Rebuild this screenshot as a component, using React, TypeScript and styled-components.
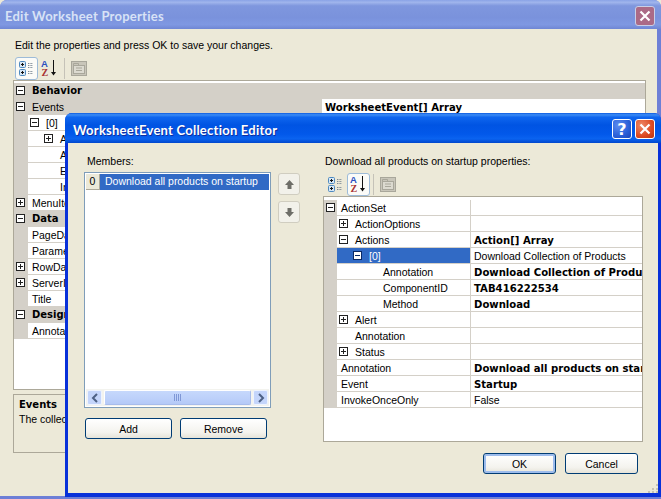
import React from "react";
import styled, { createGlobalStyle } from "styled-components";

const GlobalStyle = createGlobalStyle`
  html, body { margin: 0; padding: 0; background: #ece9d8; }
  #root { width: 661px; height: 499px; }
`;

const Desktop = styled.div`
  position: relative;
  width: 661px;
  height: 499px;
  overflow: hidden;
  font-family: "Liberation Sans", "DejaVu Sans", sans-serif;
  font-size: 10.5px;
  color: #000;
`;

const Frame = styled.div<{ $left: number; $top: number; $width: number; $height: number; $active?: boolean }>`
  position: absolute;
  left: ${(p) => p.$left}px;
  top: ${(p) => p.$top}px;
  width: ${(p) => p.$width}px;
  height: ${(p) => p.$height}px;
  box-sizing: border-box;
  display: flex;
  flex-direction: column;
  border-radius: 7px 7px 0 0;
  padding: 0 ${(p) => (p.$active ? 3 : 4)}px ${(p) => (p.$active ? 4 : 3)}px;
  background: ${(p) => (p.$active ? "#0831d9" : "#6d7fd6")};
`;

const TitleBar = styled.div<{ $active?: boolean; $height: number }>`
  display: flex;
  align-items: center;
  flex: none;
  height: ${(p) => p.$height}px;
  box-sizing: border-box;
  margin: 0 -${(p) => (p.$active ? 3 : 4)}px;
  padding: 2px 6px 0 ${(p) => (p.$active ? 8 : 5)}px;
  border-radius: 7px 7px 0 0;
  background: ${(p) =>
    p.$active
      ? "linear-gradient(180deg, #0a5ae0 0%, #3c8cf5 6%, #0f66ee 14%, #0054e3 40%, #0258ea 70%, #0a63f0 86%, #0147cc 100%)"
      : "linear-gradient(180deg, #8aa3e6 0%, #a0b5ec 8%, #7f97de 20%, #7a92dc 60%, #7f98e2 85%, #6f86d4 100%)"};
`;

const TitleText = styled.span<{ $active?: boolean }>`
  flex: 1;
  padding-top: 1px;
  font-family: Lato, "DejaVu Sans", sans-serif;
  font-weight: 700;
  font-size: 13px;
  letter-spacing: 0.24px;
  white-space: nowrap;
  color: ${(p) => (p.$active ? "#fff" : "#d8e2f6")};
  text-shadow: ${(p) => (p.$active ? "1px 1px 0 #0f2fa0" : "none")};
`;

const CaptionButton = styled.div<{ $tone: "help" | "close" | "faded" }>`
  width: 20px;
  height: 20px;
  margin-left: 3px;
  box-sizing: border-box;
  display: flex;
  align-items: center;
  justify-content: center;
  border: 1px solid ${(p) => (p.$tone === "faded" ? "#c9cfe6" : "#fff")};
  border-radius: 3px;
  font: 700 16px "DejaVu Sans", sans-serif;
  color: #fff;
  background: ${(p) =>
    p.$tone === "help"
      ? "radial-gradient(circle at 30% 30%, #5c8df0, #2a5fd8 60%, #1c45b8)"
      : p.$tone === "close"
        ? "radial-gradient(circle at 30% 30%, #ee8a68, #dd4a22 60%, #b8340f)"
        : "#ab6a86"};
`;

const Client = styled.div`
  flex: 1;
  min-height: 0;
  position: relative;
  background: #ece9d8;
`;

const BackBody = styled(Client)`
  display: flex;
  flex-direction: column;
  margin-left: -4px;
  padding: 9px 11px 0 13px;
`;

const Hint = styled.div`
  padding-left: 2px;
  height: 14px;
  line-height: 14px;
  white-space: nowrap;
`;

const ToolRow = styled.div<{ $inset: number; $top: number }>`
  display: flex;
  align-items: center;
  height: 23px;
  flex: none;
  margin-top: ${(p) => p.$top}px;
  padding-left: ${(p) => p.$inset}px;
`;

const ToolButton = styled.div<{ $on?: boolean }>`
  width: 23px;
  height: 23px;
  box-sizing: border-box;
  display: flex;
  align-items: center;
  justify-content: center;
  border-radius: 3px;
  border: 1px solid ${(p) => (p.$on ? "#9dbbd8" : "transparent")};
  background: ${(p) => (p.$on ? "#fbfbf8" : "transparent")};
`;

const ToolSep = styled.div`
  width: 1px;
  height: 21px;
  margin: 0 6px 0 3px;
  background: #c5c2b8;
`;

const DisabledIcon = styled.div`
  display: flex;
`;

const GridBox = styled.div<{ $grow?: boolean; $height?: number }>`
  box-sizing: border-box;
  border: 1px solid #aca899;
  background: #fff;
  flex: ${(p) => (p.$grow ? 1 : "none")};
  height: ${(p) => (p.$height ? `${p.$height}px` : "auto")};
  overflow: hidden;
`;

const Row = styled.div`
  display: flex;
  height: 16px;
  box-sizing: border-box;
  line-height: 16px;
  white-space: nowrap;
`;

const Gutter = styled.div<{ $width: number }>`
  flex: none;
  width: ${(p) => p.$width}px;
  box-sizing: border-box;
  padding: 3px 0 0 2px;
  background: #d4d0c8;
`;

const NameCell = styled.div<{ $width: number; $tone: "plain" | "gray" | "blue"; $indent: number; $strong?: boolean }>`
  flex: none;
  display: flex;
  align-items: center;
  width: ${(p) => p.$width}px;
  box-sizing: border-box;
  padding-left: ${(p) => p.$indent}px;
  overflow: hidden;
  border-bottom: 1px solid #d4d0c8;
  font-family: ${(p) => (p.$strong ? `"DejaVu Sans", sans-serif` : "inherit")};
  font-weight: ${(p) => (p.$strong ? 700 : 400)};
  font-size: ${(p) => (p.$strong ? "10px" : "inherit")};
  background: ${(p) => (p.$tone === "gray" ? "#d4d0c8" : p.$tone === "blue" ? "#316ac5" : "#fff")};
  color: ${(p) => (p.$tone === "blue" ? "#fff" : "#000")};
`;

const ValueCell = styled.div<{ $strong?: boolean; $tone?: "gray" }>`
  flex: 1;
  min-width: 0;
  padding-left: 3px;
  overflow: hidden;
  border-left: 1px solid #d4d0c8;
  border-bottom: 1px solid #d4d0c8;
  font-family: ${(p) => (p.$strong ? `"DejaVu Sans", sans-serif` : "inherit")};
  font-weight: ${(p) => (p.$strong ? 700 : 400)};
  font-size: ${(p) => (p.$strong ? "10.100px" : "inherit")};
  line-height: ${(p) => (p.$strong ? "18px" : "16px")};
  background: ${(p) => (p.$tone === "gray" ? "#d4d0c8" : "#fff")};
`;

const Expander = styled.span<{ $gap?: number }>`
  flex: none;
  display: block;
  width: 9px;
  height: 9px;
  margin-right: ${(p) => p.$gap ?? 0}px;
`;

const HelpBox = styled.div`
  flex: none;
  height: 59px;
  margin: 4px 0 43px;
  box-sizing: border-box;
  border: 1px solid #aca899;
  padding: 2px 5px;
  line-height: 15px;
`;

const HelpTitle = styled.div`
  font-family: "DejaVu Sans", sans-serif;
  font-weight: 700;
  font-size: 10px;
`;

const FrontBody = styled(Client)`
  display: flex;
  padding: 11px 0 0 16px;
`;

const LeftCol = styled.div`
  flex: none;
  width: 187px;
  display: flex;
  flex-direction: column;
`;

const FieldLabel = styled.div<{ $inset: number; $below: number }>`
  height: 14px;
  margin-bottom: ${(p) => p.$below}px;
  padding-left: ${(p) => p.$inset}px;
  line-height: 14px;
  white-space: nowrap;
`;

const ListBox = styled.div`
  height: 236px;
  box-sizing: border-box;
  display: flex;
  flex-direction: column;
  justify-content: space-between;
  padding: 1px;
  border: 1px solid #7f9db9;
  background: #fff;
`;

const ListItem = styled.div`
  display: flex;
  height: 16px;
  line-height: 15px;
  white-space: nowrap;
`;

const IndexBadge = styled.div`
  flex: none;
  width: 14px;
  box-sizing: border-box;
  text-align: center;
  background: #ece9d8;
  border-right: 1px solid #aca899;
  border-bottom: 1px solid #aca899;
`;

const ItemLabel = styled.div`
  flex: 1;
  padding-left: 5px;
  background: #316ac5;
  color: #fff;
`;

const ScrollBar = styled.div`
  display: flex;
  align-items: center;
  gap: 2px;
  height: 17px;
  padding: 0 1px;
  background: #f3f3ee;
`;

const ScrollArrow = styled.div`
  flex: none;
  width: 15px;
  height: 15px;
  box-sizing: border-box;
  display: flex;
  align-items: center;
  justify-content: center;
  border: 1px solid #eef3fe;
  border-radius: 2px;
  background: #c4d5fb;
`;

const ScrollThumb = styled.div`
  flex: 1;
  height: 15px;
  box-sizing: border-box;
  display: flex;
  align-items: center;
  justify-content: center;
  border: 1px solid #fff;
  border-right-color: #a8bcec;
  border-bottom-color: #a8bcec;
  border-radius: 2px;
  background: linear-gradient(180deg, #c6d8fc, #bcd0fa 60%, #b4c9f7);
`;

const ListButtons = styled.div`
  display: flex;
  justify-content: space-between;
  margin: 10px 4px 0 1px;
`;

const PushButton = styled.div<{ $width: number; $isDefault?: boolean }>`
  width: ${(p) => p.$width}px;
  height: 21px;
  box-sizing: border-box;
  display: flex;
  align-items: center;
  justify-content: center;
  border: 1px solid #003c74;
  border-radius: 3px;
  background: linear-gradient(180deg, #fff, #f4f3ee 70%, #e6e3d8);
  box-shadow: ${(p) => (p.$isDefault ? "inset 0 0 0 2px #9dbcec" : "none")};
`;

const ArrowCol = styled.div`
  flex: none;
  display: flex;
  flex-direction: column;
  gap: 6px;
  margin: 19px 23px 0 7px;
`;

const MoveButton = styled.div`
  width: 22px;
  height: 22px;
  box-sizing: border-box;
  display: flex;
  align-items: center;
  justify-content: center;
  border: 1px solid #d0cdc0;
  border-radius: 3px;
  background: #f2f1ea;
`;

const RightCol = styled.div`
  flex: none;
  width: 320px;
  display: flex;
  flex-direction: column;
`;

const RowStack = styled.div<{ $top: number }>`
  padding-top: ${(p) => p.$top}px;
  background: #fff;
`;

const Footer = styled.div`
  display: flex;
  justify-content: flex-end;
  gap: 9px;
  margin-top: 11px;
  padding-right: 5px;
`;

const Grip = styled.svg`
  position: absolute;
  right: 0;
  bottom: 0;
`;

function ExpandBox({ open, gap, light }: { open: boolean; gap?: number; light?: boolean }) {
  const stroke = light ? "#0b2a66" : "#222";
  return (
    <Expander $gap={gap}>
      <svg width="9" height="9" viewBox="0 0 9 9" style={{ display: "block" }}>
        <rect x="0.5" y="0.5" width="8" height="8" fill="#fff" stroke={stroke} />
        <path d={open ? "M2 4.5h5" : "M2 4.5h5M4.5 2v5"} stroke={stroke} />
      </svg>
    </Expander>
  );
}

function CategoryIcon() {
  const lines = "M10 3.5h5M10 5.5h5M10 7.5h5M10 11.5h5M10 13.5h5";
  return (
    <svg width="17" height="17" viewBox="0 0 17 17">
      <rect x="1.5" y="1.5" width="6" height="6" rx="1" fill="#d6e6f4" stroke="#4f8ac0" />
      <rect x="1.5" y="9.5" width="6" height="6" rx="1" fill="#d6e6f4" stroke="#4f8ac0" />
      <path d="M3 4.5h3M4.5 3v3M3 12.5h3M4.5 11v3" stroke="#111" />
      <path d={lines} stroke="#7d8a96" strokeDasharray="1 0.6" />
    </svg>
  );
}

function SortIcon() {
  return (
    <svg width="17" height="19" viewBox="0 0 17 19">
      <text x="0" y="8" fontFamily="Liberation Sans, sans-serif" fontWeight="700" fontSize="9.5" fill="#2a4fc0">A</text>
      <text x="0.5" y="17" fontFamily="Liberation Serif, serif" fontWeight="700" fontSize="10" fill="#a83232">Z</text>
      <path d="M12.5 1v13" stroke="#111" />
      <path d="M10 13h5l-2.500 3.500z" fill="#111" />
    </svg>
  );
}

function PagesIcon() {
  return (
    <svg width="16" height="15" viewBox="0 0 16 15">
      <rect x="0.500" y="0.500" width="15" height="14" fill="#c9c6ba" stroke="#a9a79b" />
      <rect x="2.500" y="4.500" width="11" height="8" fill="#dcdad0" stroke="#a9a79b" />
      <path d="M2.500 4.500v-2h5v2M5 7h6M5 9.500h6" fill="none" stroke="#a9a79b" />
    </svg>
  );
}

function Toolbar({ inset, top, sorted }: { inset: number; top: number; sorted?: boolean }) {
  return (
    <ToolRow $inset={inset} $top={top}>
      <ToolButton $on={!sorted}><CategoryIcon /></ToolButton>
      <ToolButton $on={sorted}><SortIcon /></ToolButton>
      <ToolSep />
      <DisabledIcon><PagesIcon /></DisabledIcon>
    </ToolRow>
  );
}

function CloseGlyph() {
  return (
    <svg width="12" height="12" viewBox="0 0 12 12">
      <path d="M1.500 1.500l9 9M10.500 1.500l-9 9" stroke="#fff" strokeWidth="2.200" />
    </svg>
  );
}

type BackRow = { name: string; value?: string; open?: boolean; level?: number; tone?: "gray"; head?: boolean };

const backRows: BackRow[] = [
  { name: "Behavior", open: true, head: true },
  { name: "Events", open: true, tone: "gray", value: "WorksheetEvent[] Array" },
  { name: "[0]", open: true, level: 1 },
  { name: "ActionSet", open: false, level: 2 },
  { name: "Annotation", level: 2 },
  { name: "Event", level: 2 },
  { name: "InvokeOnceOnly", level: 2 },
  { name: "MenuItems", open: false },
  { name: "Data", open: true, head: true },
  { name: "PageData" },
  { name: "Parameters" },
  { name: "RowData", open: false },
  { name: "ServerInfo", open: false },
  { name: "Title" },
  { name: "Design", open: true, head: true },
  { name: "Annotation" },
];

type FrontRow = { name: string; value?: string; strong?: boolean; open?: boolean; level?: number; selected?: boolean };

const frontRows: FrontRow[] = [
  { name: "ActionSet", open: true },
  { name: "ActionOptions", open: false, level: 1 },
  { name: "Actions", open: true, level: 1, value: "Action[] Array", strong: true },
  { name: "[0]", open: true, level: 2, selected: true, value: "Download Collection of Products" },
  { name: "Annotation", level: 3, value: "Download Collection of Products", strong: true },
  { name: "ComponentID", level: 3, value: "TAB416222534", strong: true },
  { name: "Method", level: 3, value: "Download", strong: true },
  { name: "Alert", open: false, level: 1 },
  { name: "Annotation", level: 1 },
  { name: "Status", open: false, level: 1 },
  { name: "Annotation", value: "Download all products on startup", strong: true },
  { name: "Event", value: "Startup", strong: true },
  { name: "InvokeOnceOnly", value: "False" },
];

function BackGridRow({ row }: { row: BackRow }) {
  const level = row.level ?? 0;
  const top = row.open !== undefined && level === 0;
  const nested = row.open !== undefined && level > 0;
  return (
    <Row>
      <Gutter $width={14}>{top && <ExpandBox open={!!row.open} />}</Gutter>
      <NameCell
        $width={293}
        $tone={row.head || row.tone ? "gray" : "plain"}
        $strong={row.head}
        $indent={nested ? 2 + (level - 1) * 14 : 4 + level * 14}
      >
        {nested && <ExpandBox open={!!row.open} gap={7} />}
        {row.name}
      </NameCell>
      <ValueCell $strong={!!row.value} $tone={row.head ? "gray" : undefined}>{row.value}</ValueCell>
    </Row>
  );
}

function FrontGridRow({ row }: { row: FrontRow }) {
  const level = row.level ?? 0;
  const top = row.open !== undefined && level === 0;
  const nested = row.open !== undefined && level > 0;
  return (
    <Row>
      <Gutter $width={13}>{top && <ExpandBox open={!!row.open} />}</Gutter>
      <NameCell
        $width={133}
        $tone={row.selected ? "blue" : "plain"}
        $indent={nested ? 2 + (level - 1) * 14 : 4 + level * 14}
      >
        {nested && <ExpandBox open={!!row.open} gap={7} light={row.selected} />}
        {row.name}
      </NameCell>
      <ValueCell $strong={row.strong}>{row.value}</ValueCell>
    </Row>
  );
}

export default function App() {
  return (
    <Desktop>
      <GlobalStyle />
      <Frame $left={0} $top={0} $width={661} $height={499}>
        <TitleBar $height={29}>
          <TitleText>Edit Worksheet Properties</TitleText>
          <CaptionButton $tone="faded"><CloseGlyph /></CaptionButton>
        </TitleBar>
        <BackBody>
          <Hint>Edit the properties and press OK to save your changes.</Hint>
          <Toolbar inset={2} top={5} />
          <GridBox $grow>
            <RowStack $top={2}>
              {backRows.map((row, i) => <BackGridRow key={i} row={row} />)}
            </RowStack>
          </GridBox>
          <HelpBox>
            <HelpTitle>Events</HelpTitle>
            <div>The collection of events</div>
          </HelpBox>
        </BackBody>
      </Frame>

      <Frame $active $left={65} $top={113} $width={596} $height={384}>
        <TitleBar $active $height={30}>
          <TitleText $active>WorksheetEvent Collection Editor</TitleText>
          <CaptionButton $tone="help">?</CaptionButton>
          <CaptionButton $tone="close"><CloseGlyph /></CaptionButton>
        </TitleBar>
        <FrontBody>
          <LeftCol>
            <FieldLabel $inset={3} $below={4}>Members:</FieldLabel>
            <ListBox>
              <ListItem>
                <IndexBadge>0</IndexBadge>
                <ItemLabel>Download all products on startup</ItemLabel>
              </ListItem>
              <ScrollBar>
                <ScrollArrow>
                  <svg width="8" height="10" viewBox="0 0 8 10"><path d="M6 1L2 5l4 4" fill="none" stroke="#4d6185" strokeWidth="2" /></svg>
                </ScrollArrow>
                <ScrollThumb>
                  <svg width="8" height="7" viewBox="0 0 8 7"><path d="M.5 0v7M2.500 0v7M4.500 0v7M6.500 0v7" stroke="#7f97d6" /></svg>
                </ScrollThumb>
                <ScrollArrow>
                  <svg width="8" height="10" viewBox="0 0 8 10"><path d="M2 1l4 4-4 4" fill="none" stroke="#4d6185" strokeWidth="2" /></svg>
                </ScrollArrow>
              </ScrollBar>
            </ListBox>
            <ListButtons>
              <PushButton $width={87}>Add</PushButton>
              <PushButton $width={87}>Remove</PushButton>
            </ListButtons>
          </LeftCol>
          <ArrowCol>
            <MoveButton>
              <svg width="11" height="11" viewBox="0 0 11 11"><path d="M5.500 1L10 6H7.500v4h-4V6H1z" fill="#6e6e68" /></svg>
            </MoveButton>
            <MoveButton>
              <svg width="11" height="11" viewBox="0 0 11 11"><path d="M5.500 10L10 5H7.500V1h-4v4H1z" fill="#6e6e68" /></svg>
            </MoveButton>
          </ArrowCol>
          <RightCol>
            <FieldLabel $inset={2} $below={5}>Download all products on startup properties:</FieldLabel>
            <Toolbar inset={1} top={0} sorted />
            <GridBox $height={246}>
              <RowStack $top={3}>
                {frontRows.map((row, i) => <FrontGridRow key={i} row={row} />)}
              </RowStack>
            </GridBox>
            <Footer>
              <PushButton $width={73} $isDefault>OK</PushButton>
              <PushButton $width={73}>Cancel</PushButton>
            </Footer>
          </RightCol>
          <Grip width="10" height="10" viewBox="0 0 10 10">
            <path d="M8 1h2v2H8zM4 5h2v2H4zM8 5h2v2H8zM0 8h2v2H0zM4 8h2v2H4zM8 8h2v2H8z" fill="#c5c2b4" />
          </Grip>
        </FrontBody>
      </Frame>
    </Desktop>
  );
}
